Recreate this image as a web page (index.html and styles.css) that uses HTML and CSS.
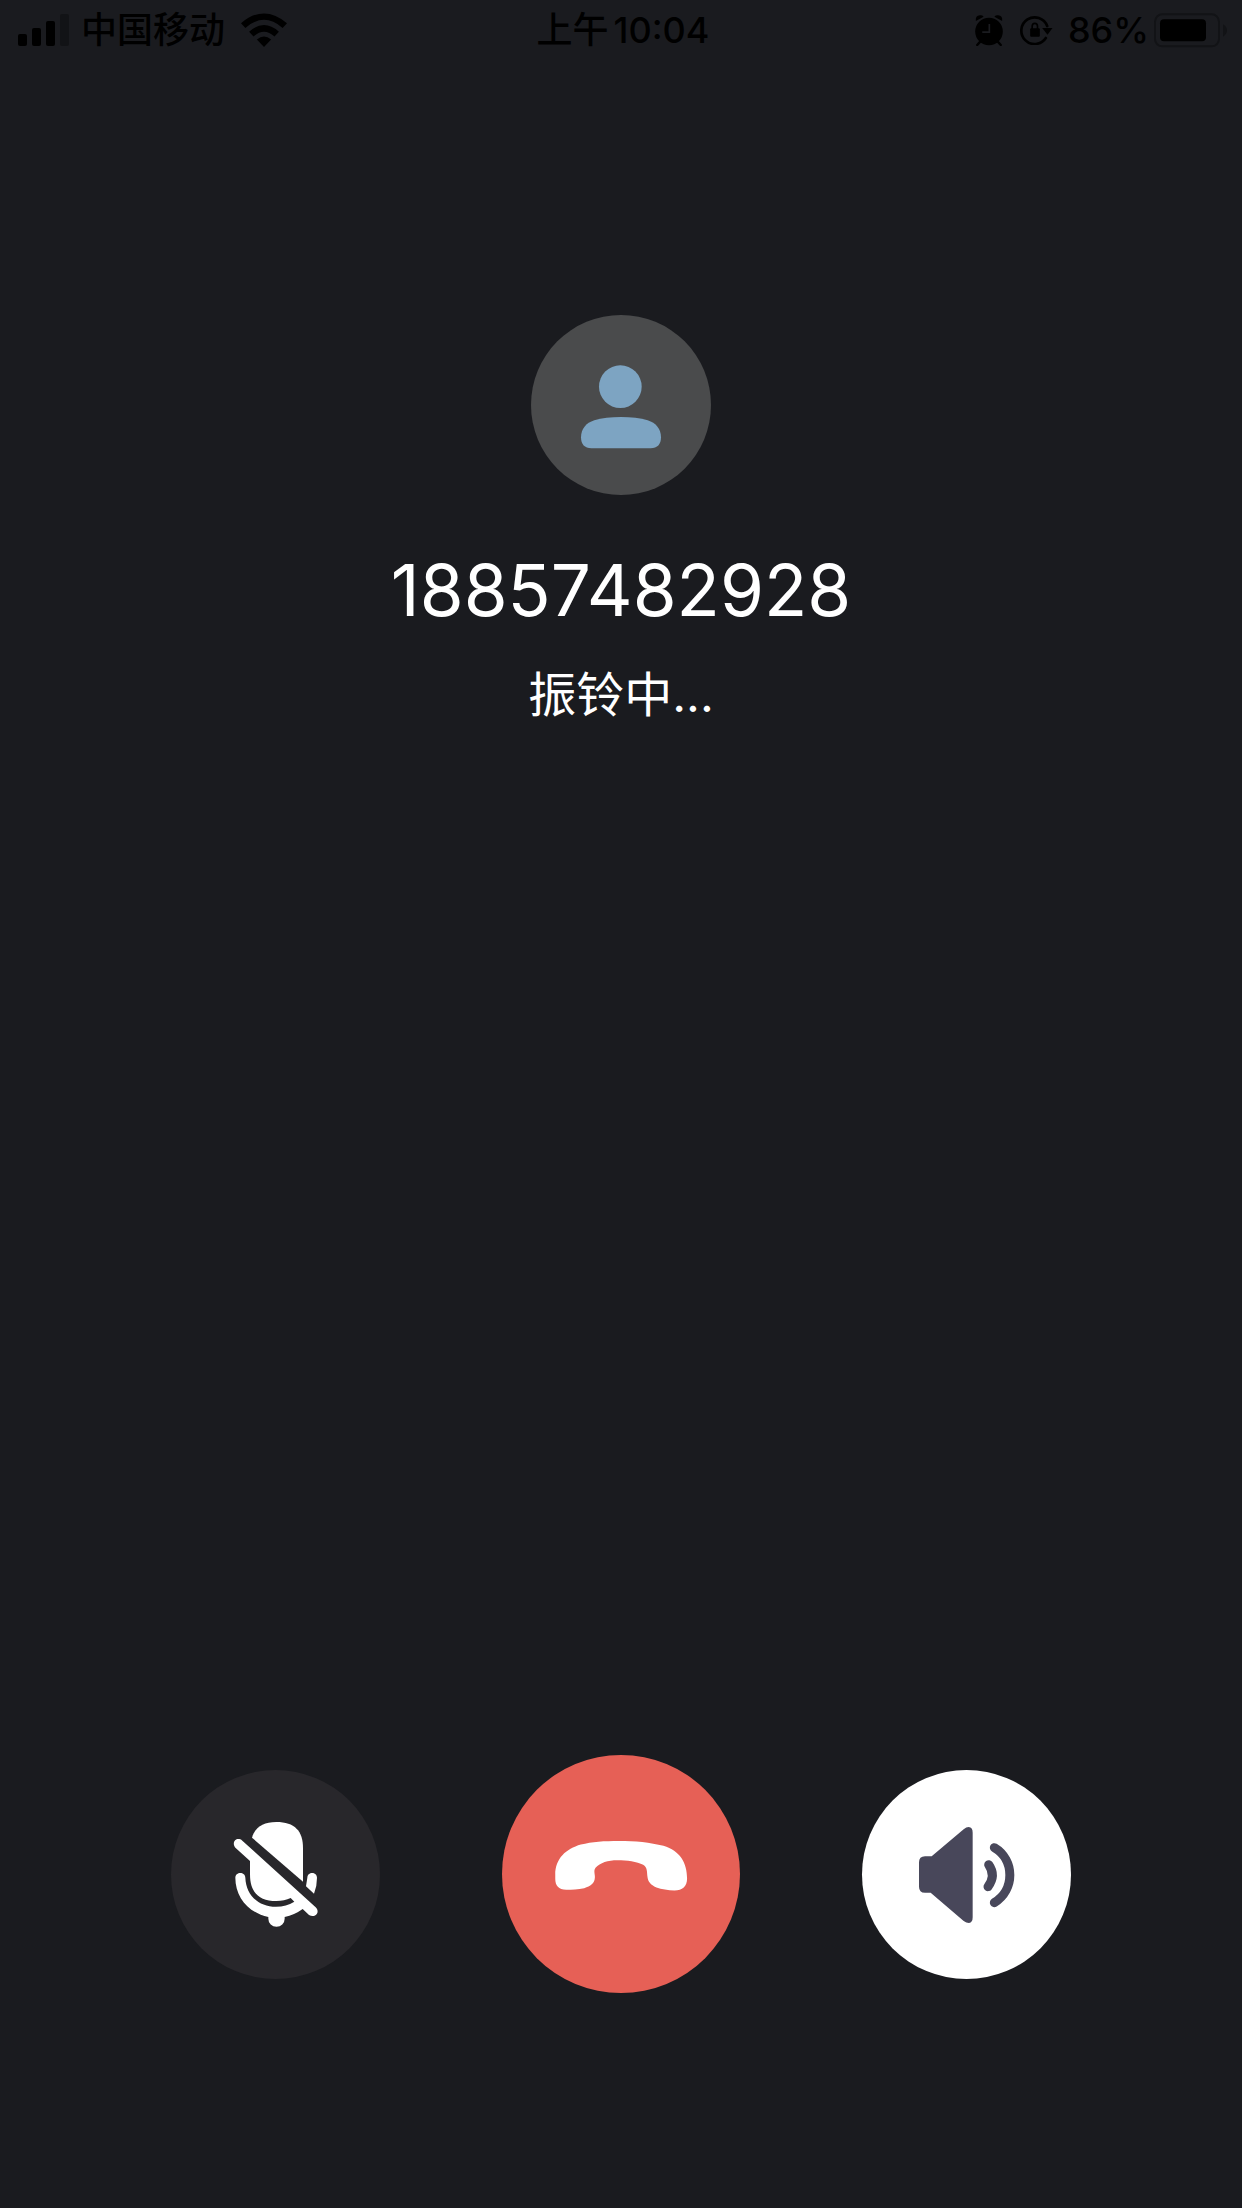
FILE: index.html
```html
<!DOCTYPE html>
<html lang="zh-CN">
<head>
    <meta charset="UTF-8">
    <meta name="viewport" content="width=device-width, initial-scale=1.0">
    <title>通话</title>
    <link rel="stylesheet" href="styles.css">
</head>
<body>

    <header class="status-bar">
        <div class="status-left">
            <svg class="signal" viewBox="0 0 51 32" aria-hidden="true">
                <rect x="0" y="20" width="9" height="12" rx="2"/>
                <rect x="14" y="14" width="9" height="18" rx="2"/>
                <rect x="28" y="7" width="9" height="25" rx="2"/>
                <rect class="dim" x="42" y="0" width="9" height="32" rx="2"/>
            </svg>
            <span class="carrier">中国移动</span>
            <svg class="wifi" viewBox="724 38 136 100" aria-hidden="true">
                <path d="M724 68Q792 10 860 68L847 82Q792 34 737 82Z"/>
                <path d="M748 93Q792 54 836 93L823 107Q792 79 761 107Z"/>
                <path d="M771 116Q792 99 813 116L792 138Z"/>
            </svg>
        </div>
        <div class="status-time"><span>上午</span><span>10:04</span></div>
        <div class="status-right">
            <svg class="alarm" viewBox="50 38 82 92" aria-hidden="true">
                <circle cx="91" cy="87" r="41"/>
                <path d="M52 56Q50 40 64 39Q71 38 75 43Z"/>
                <path d="M130 56Q132 40 118 39Q111 38 107 43Z"/>
                <path class="line" d="M65 117L56 127M117 117L126 127"/>
                <path class="hands" d="M92 65V89H71"/>
            </svg>
            <svg class="rotation-lock" viewBox="185 43 98 90" aria-hidden="true">
                <path class="ring" d="M262 112A40 40 0 1 1 266 76"/>
                <path d="M251 82H282L267 102Z"/>
                <rect x="215" y="83" width="29" height="25" rx="3"/>
                <path class="shackle" d="M221 85V77Q221 68 229 68Q237 68 237 77V85"/>
            </svg>
            <span class="battery-level">86%</span>
            <svg class="battery" viewBox="582 35 222 105" aria-hidden="true">
                <rect class="outline" x="585" y="39" width="192" height="96" rx="22"/>
                <rect x="600" y="54" width="138" height="66" rx="12"/>
                <path class="dim" d="M789 69Q801 76 801 87Q801 99 789 106Z"/>
            </svg>
        </div>
    </header>

    <main class="call">
        <div class="avatar">
            <svg viewBox="33 30 540 540" aria-hidden="true">
                <circle cx="301" cy="245" r="64"/>
                <path d="M183 397C183 372 198 354 223 346C245 339 273 336 303 336C333 336 361 339 383 346C408 354 423 372 423 397C423 418 412 430 392 430H214C194 430 183 418 183 397Z"/>
            </svg>
        </div>
        <h1 class="number">18857482928</h1>
        <p class="state">振铃中...</p>
    </main>

    <footer class="controls">
        <button type="button" class="btn btn-mute" aria-label="静音">
            <svg viewBox="33 30 627 627" aria-hidden="true">
                <path d="M276 233C286 201 309 186 349 186C404 186 429 213 429 264V365Z"/>
                <path d="M247 242L467 442C482 457 465 476 447 465L428 447Q403 465 374 471V476A24 24 0 0 1 325 476V471C265 458 226 411 226 353C226 334 256 334 256 353C258 405 295 440 348 440Q379 440 403 425L392 414Q373 423 349 423C298 423 270 399 270 343V303L227 264C212 248 230 228 247 242Z"/>
                <path d="M442 353C442 334 471 334 471 353Q471 379 462 401L438 379Z"/>
            </svg>
        </button>
        <button type="button" class="btn btn-hangup" aria-label="挂断">
            <svg viewBox="23 30 715 715" aria-hidden="true">
                <path d="M183 390C183 341 215 312 260 299C293 290 331 288 374 288C422 288 469 292 508 303C558 318 579 354 579 401C579 425 565 437 541 437C522 437 502 433 487 428C469 421 461 409 460 396C458 381 460 367 447 360C429 350 398 346 370 346C341 346 318 353 304 369C297 378 303 389 302 399C301 415 289 425 270 430C251 433 233 435 216 435C193 435 183 423 183 402Z"/>
            </svg>
        </button>
        <button type="button" class="btn btn-speaker" aria-label="扬声器">
            <svg viewBox="33 30 627 627" aria-hidden="true">
                <path d="M204 307Q204 289 222 289H242L338 208Q346 201 353 201Q365 202 365 218V472Q365 488 354 489Q346 489 338 483L239 398H222Q204 398 204 380Z"/>
                <path class="wave" d="M413 314Q436 347 411 380"/>
                <path class="wave" d="M430 263C492 300 492 390 430 428"/>
            </svg>
        </button>
    </footer>

</body>
</html>
```
FILE: styles.css
```css
* {
    box-sizing: border-box;
}
body {
    margin: 0;
    min-height: 100vh;
    display: flex;
    flex-direction: column;
    background-color: #1a1b1f;
    color: #fff;
    font-family: Inter, "Noto Sans CJK SC", sans-serif;
}
svg {
    display: block;
    fill: currentColor;
}

/* status bar */
.status-bar {
    display: grid;
    grid-template-columns: 1fr auto 1fr;
    align-items: center;
    height: 60px;
    padding: 0 14px 0 18px;
    color: #000;
    font-size: 36px;
    font-weight: 500;
    line-height: 60px;
}
.status-left,
.status-right {
    display: flex;
    align-items: center;
}
.status-right {
    justify-content: flex-end;
}
.status-time {
    display: flex;
    gap: 5px;
}
.signal {
    width: 51px;
    height: 32px;
    margin-right: 12px;
}
.wifi {
    width: 46px;
    height: 34px;
    margin-left: 16px;
}
.alarm {
    width: 28px;
    height: 31px;
}
.rotation-lock {
    width: 33px;
    height: 30px;
    margin: 0 15px 0 17px;
}
.battery {
    width: 74px;
    height: 35px;
    margin-left: 5px;
}
.dim {
    fill: #121316;
}
.line,
.ring,
.shackle {
    fill: none;
    stroke: #000;
    stroke-width: 7;
    stroke-linecap: round;
}
.ring {
    stroke-width: 8;
}
.shackle {
    stroke-width: 5;
}
.hands {
    fill: none;
    stroke: #1a1b1f;
    stroke-width: 5;
}
.outline {
    fill: none;
    stroke: #121316;
    stroke-width: 6;
}

/* caller */
.call {
    display: flex;
    flex-direction: column;
    align-items: center;
    padding-top: 255px;
}
.avatar {
    width: 180px;
    height: 180px;
    border-radius: 50%;
    background-color: #4a4b4c;
    color: #7da4c2;
}
.number {
    margin: 53px 0 0;
    font-size: 71px;
    font-weight: 400;
    line-height: 84px;
}
.state {
    margin: 27px 0 0;
    font-size: 48px;
    font-weight: 400;
    line-height: 72px;
}

/* call buttons */
.controls {
    display: flex;
    justify-content: space-between;
    align-items: center;
    margin-top: auto;
    padding: 0 171px 215px;
}
.btn {
    width: 209px;
    height: 209px;
    padding: 0;
    border: none;
    border-radius: 50%;
    cursor: pointer;
}
.btn-mute {
    background-color: #28272b;
    color: #fff;
}
.btn-hangup {
    width: 238px;
    height: 238px;
    background-color: #e66056;
    color: #fff;
}
.btn-speaker {
    background-color: #fff;
    color: #48475a;
}
.wave {
    fill: none;
    stroke: currentColor;
    stroke-width: 27;
    stroke-linecap: round;
}
```
